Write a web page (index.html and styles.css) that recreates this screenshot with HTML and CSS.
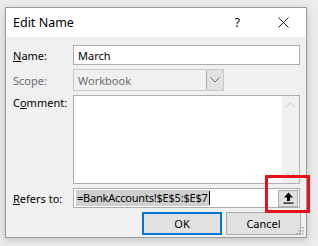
FILE: index.html
```html
<!DOCTYPE html>
<html>
<head>
<meta charset="utf-8">
<link rel="stylesheet" href="styles.css">
</head>
<body>
<div class="dialog">
  <div class="titlebar">
    <span class="title">Edit Name</span>
    <span class="help">?</span>
    <svg class="close" width="11" height="11" viewBox="0 0 11 11"><path d="M0.5 0.5L10.5 10.5M10.5 0.5L0.5 10.5" stroke="#222" stroke-width="1" fill="none"/></svg>
  </div>
  <div class="body">
    <div class="grid">
      <label class="lbl"><u>N</u>ame:</label>
      <div class="input name">March</div>

      <label class="lbl disabled">Scope:</label>
      <div class="scope">
        <div class="scope-text">Workbook</div>
        <div class="scope-btn"><svg width="10" height="6" viewBox="0 0 10 6"><path d="M0.5 0.5L5 5L9.5 0.5" stroke="#6a6a6a" fill="none"/></svg></div>
      </div>

      <label class="lbl top">C<u>o</u>mment:</label>
      <div class="input comment">
        <div class="comment-area"></div>
        <div class="scrollbar">
          <svg width="9" height="6" viewBox="0 0 9 6"><path d="M0.5 5L4.5 1L8.5 5" stroke="#c2c2c2" fill="none"/></svg>
          <svg width="9" height="6" viewBox="0 0 9 6"><path d="M0.5 1L4.5 5L8.5 1" stroke="#c2c2c2" fill="none"/></svg>
        </div>
      </div>

      <label class="lbl"><u>R</u>efers to:</label>
      <div class="input refers">
        <span class="sel">=BankAccounts!$E$5:$E$7</span><span class="caret"></span>
        <div class="refbtn">
          <svg width="11" height="12" viewBox="0 0 11 12"><path d="M5.5 0.5L10 5.5H7V9H4V5.5H1Z" fill="#000"/><rect x="0.5" y="10.5" width="10" height="1.2" fill="#000"/></svg>
        </div>
      </div>
    </div>
    <div class="buttons">
      <button class="btn default">OK</button>
      <button class="btn">Cancel</button>
    </div>
    <svg class="grip" width="8" height="8" viewBox="0 0 8 8"><g fill="#a0a0a0"><rect x="6" y="0" width="1.5" height="1.5"/><rect x="3" y="3" width="1.5" height="1.5"/><rect x="6" y="3" width="1.5" height="1.5"/><rect x="0" y="6" width="1.5" height="1.5"/><rect x="3" y="6" width="1.5" height="1.5"/><rect x="6" y="6" width="1.5" height="1.5"/></g></svg>
  </div>
  <div class="highlight"></div>
</div>
</body>
</html>
```

FILE: styles.css
```css
html, body {
  margin: 0;
  padding: 0;
}
body {
  width: 318px;
  height: 246px;
  background: #ececec;
  font-family: "Noto Sans", "Open Sans", sans-serif;
  font-size: 11px;
  color: #000;
  overflow: hidden;
}
.dialog {
  position: relative;
  margin: 7px 0 0 5px;
  width: 300px;
  height: 229px;
  border: 1px solid #9a9a9a;
  background: #f0f0f0;
  box-shadow: 0 2px 8px rgba(0,0,0,0.18);
  display: flex;
  flex-direction: column;
}
.titlebar {
  height: 29px;
  background: #fff;
  display: flex;
  align-items: center;
  padding-left: 7px;
}
.title {
  font-size: 12.5px;
  flex: 1;
}
.help {
  font-size: 12px;
  margin-right: 38px;
}
.close {
  margin-right: 17px;
}
.body {
  position: relative;
  flex: 1;
  padding: 8px 5px 0 7px;
}
.grid {
  display: grid;
  grid-template-columns: 60px 227px;
  grid-template-rows: 20px 22px 89px 20px;
  row-gap: 4px;
}
.lbl {
  display: flex;
  align-items: center;
}
.lbl.top {
  align-items: flex-start;
  padding-top: 0;
}
.lbl.disabled {
  color: #6d6d6d;
}
.input {
  box-sizing: border-box;
  border: 1px solid #adadad;
  background: #fff;
  display: flex;
  align-items: center;
  padding-left: 4px;
}
.scope {
  box-sizing: border-box;
  width: 151px;
  border: 1px solid #c8c8c8;
  background: #f0f0f0;
  display: flex;
  color: #6d6d6d;
}
.scope-text {
  flex: 1;
  padding-left: 4px;
  display: flex;
  align-items: center;
}
.scope-btn {
  width: 16px;
  border-left: 1px solid #adadad;
  background: #e1e1e1;
  display: flex;
  align-items: center;
  justify-content: center;
}
.comment {
  padding: 0;
  align-items: stretch;
}
.comment-area {
  flex: 1;
}
.scrollbar {
  width: 17px;
  background: #f0f0f0;
  display: flex;
  flex-direction: column;
  justify-content: space-between;
  align-items: center;
  padding: 6px 0 5px;
}
.refers {
  padding-left: 2px;
}
.sel {
  background: #cfcfcf;
  padding: 0 1px;
  line-height: 16px;
  letter-spacing: -0.2px;
}
.caret {
  width: 1px;
  height: 14px;
  background: #000;
}
.refbtn {
  margin-left: auto;
  margin-right: 1px;
  box-sizing: border-box;
  width: 20px;
  height: 17px;
  background: #e1e1e1;
  border: 1px solid #adadad;
  display: flex;
  align-items: center;
  justify-content: center;
}
.buttons {
  display: flex;
  justify-content: flex-end;
  gap: 4px;
  margin-top: 4px;
}
.btn {
  box-sizing: border-box;
  width: 75px;
  height: 23px;
  font-family: inherit;
  font-size: 11px;
  background: #e1e1e1;
  border: 1px solid #adadad;
  padding: 0;
  color: #000;
}
.btn.default {
  width: 80px;
  border: 2px solid #0078d7;
}
.grip {
  position: absolute;
  right: 2px;
  bottom: 2px;
}
.highlight {
  position: absolute;
  left: 259px;
  top: 167px;
  width: 39px;
  height: 32px;
  border: 3px solid #e8101a;
}
```
